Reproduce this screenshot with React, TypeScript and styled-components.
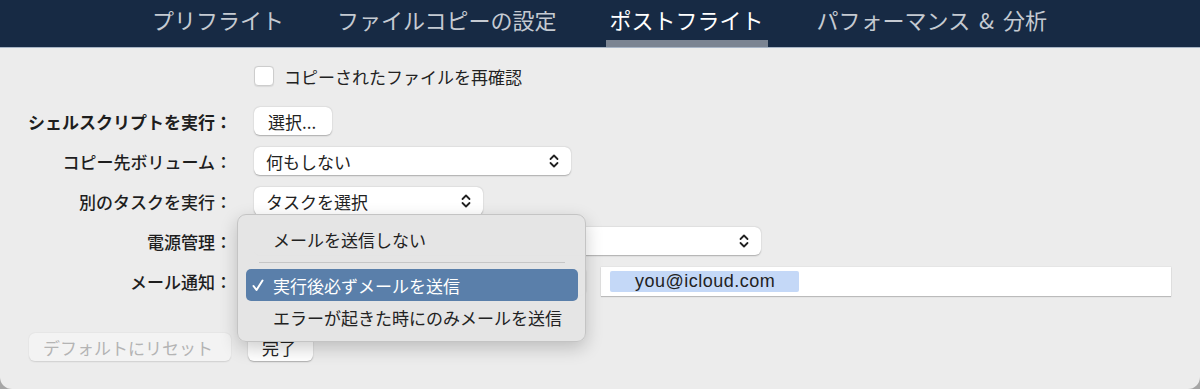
import styled, { createGlobalStyle } from "styled-components";

const GlobalStyle = createGlobalStyle`
  html, body {
    margin: 0;
    padding: 0;
    background: #a6a6a6;
  }
  body {
    font-family: "Noto Sans CJK JP", "Noto Sans", sans-serif;
    -webkit-font-smoothing: antialiased;
  }
`;

const Window = styled.div`
  width: 1200px;
  height: 389px;
  background: #ececec;
  border-radius: 0 0 12px 12px;
  overflow: hidden;
  display: flex;
  flex-direction: column;
`;

const TabBar = styled.div`
  height: 47px;
  background: #172a44;
  border-bottom: 1px solid #a7b4c5;
  display: flex;
  align-items: stretch;
  gap: 45px;
  padding-left: 148px;
`;

const Tab = styled.div<{ active?: boolean }>`
  padding: 0 4px;
  font-size: 22px;
  line-height: 39px;
  word-spacing: 4px;
  color: ${({ active }) => (active ? "#ffffff" : "#c5cad2")};
  border-bottom: 7px solid ${({ active }) => (active ? "#7b8492" : "transparent")};
  white-space: nowrap;
`;

const Form = styled.div`
  padding-top: 8px;
  display: flex;
  flex-direction: column;
`;

const Row = styled.div<{ first?: boolean }>`
  display: grid;
  grid-template-columns: 232px 1fr;
  column-gap: 22px;
  align-items: center;
  height: 40px;
  margin-bottom: ${({ first }) => (first ? "5px" : "0")};
`;

const Label = styled.div<{ bold?: boolean }>`
  text-align: right;
  font-size: 17px;
  color: #1e1e1e;
  font-weight: ${({ bold }) => (bold ? 700 : 500)};
  white-space: nowrap;
`;

const Controls = styled.div`
  display: flex;
  align-items: center;
  gap: 15px;
`;

const CheckLabel = styled.label`
  display: flex;
  align-items: center;
  gap: 10px;
  font-size: 17px;
  color: #222;
`;

const CheckBox = styled.span`
  width: 18px;
  height: 18px;
  background: #fff;
  border: 1px solid #cdcdcd;
  border-radius: 4px;
  box-shadow: 0 0.5px 1px rgba(0, 0, 0, 0.08);
`;

const Button = styled.div<{ disabled?: boolean; width: number }>`
  width: ${({ width }) => width}px;
  height: 28px;
  box-sizing: border-box;
  padding-left: 14px;
  display: flex;
  align-items: center;
  font-size: 17px;
  border-radius: 6px;
  background: ${({ disabled }) => (disabled ? "#f3f3f3" : "#ffffff")};
  color: ${({ disabled }) => (disabled ? "#b4b4b4" : "#222")};
  box-shadow: 0 0.5px 1.5px rgba(0, 0, 0, ${({ disabled }) => (disabled ? 0.12 : 0.28)});
`;

const SelectBox = styled.div<{ width: number }>`
  position: relative;
  width: ${({ width }) => width}px;
  height: 28px;
  box-sizing: border-box;
  padding: 0 12px;
  display: flex;
  align-items: center;
  justify-content: space-between;
  font-size: 17px;
  color: #222;
  background: #fff;
  border-radius: 6px;
  box-shadow: 0 0.5px 1.5px rgba(0, 0, 0, 0.28);
`;

const TextField = styled.div`
  width: 570px;
  height: 29px;
  box-sizing: border-box;
  padding: 0 9px;
  display: flex;
  align-items: center;
  background: #fff;
  box-shadow: 0 1px 1px rgba(0, 0, 0, 0.18), 0 0 0 0.5px rgba(0, 0, 0, 0.06);
`;

const Selected = styled.span`
  background: #c4d8f7;
  border-radius: 2px;
  padding: 0 24px 0 25px;
  font-family: "Liberation Sans", Arial, sans-serif;
  font-size: 18px;
  letter-spacing: 0.5px;
  line-height: 21px;
  color: #222;
`;

const Footer = styled.div`
  margin-top: 32px;
  padding-left: 29px;
  display: flex;
  gap: 17px;
`;

const Menu = styled.div`
  position: absolute;
  left: -17px;
  top: -53px;
  width: 349px;
  box-sizing: border-box;
  padding: 8px 7px 8px 8px;
  background: rgba(228, 228, 228, 0.98);
  border: 1px solid #c4c4c4;
  border-radius: 9px;
  box-shadow: 0 6px 18px rgba(0, 0, 0, 0.2);
  z-index: 2;
`;

const MenuItem = styled.div<{ highlighted?: boolean }>`
  position: relative;
  height: 32px;
  padding-left: 27px;
  display: flex;
  align-items: center;
  font-size: 17px;
  border-radius: 5px;
  white-space: nowrap;
  color: ${({ highlighted }) => (highlighted ? "#fff" : "#222")};
  background: ${({ highlighted }) => (highlighted ? "#5a7faa" : "transparent")};
`;

const CheckMark = styled.svg`
  position: absolute;
  left: 6px;
  top: 10px;
`;

const Separator = styled.div`
  height: 1px;
  margin: 7px 13px 6px;
  background: #c6c6c6;
`;

function Chevrons() {
  return (
    <svg width="10" height="16" viewBox="0 0 10 16">
      <path
        d="M1.5 6 L5 2.5 L8.5 6 M1.5 10 L5 13.5 L8.5 10"
        fill="none"
        stroke="#222"
        strokeWidth="1.8"
        strokeLinecap="round"
        strokeLinejoin="round"
      />
    </svg>
  );
}

export default function App() {
  const tabs = ["プリフライト", "ファイルコピーの設定", "ポストフライト", "パフォーマンス & 分析"];

  return (
    <>
      <GlobalStyle />
      <Window>
        <TabBar>
          {tabs.map((t, i) => (
            <Tab key={t} active={i === 2}>
              {t}
            </Tab>
          ))}
        </TabBar>

        <Form>
          <Row first>
            <div />
            <CheckLabel>
              <CheckBox />
              コピーされたファイルを再確認
            </CheckLabel>
          </Row>
          <Row>
            <Label bold>シェルスクリプトを実行：</Label>
            <Controls>
              <Button width={78}>選択...</Button>
            </Controls>
          </Row>
          <Row>
            <Label>コピー先ボリューム：</Label>
            <Controls>
              <SelectBox width={317}>
                何もしない
                <Chevrons />
              </SelectBox>
            </Controls>
          </Row>
          <Row>
            <Label>別のタスクを実行：</Label>
            <Controls>
              <SelectBox width={229}>
                タスクを選択
                <Chevrons />
              </SelectBox>
            </Controls>
          </Row>
          <Row>
            <Label>電源管理：</Label>
            <Controls>
              {/* its value is hidden under the open menu */}
              <SelectBox width={507}>
                <span />
                <Chevrons />
              </SelectBox>
            </Controls>
          </Row>
          <Row>
            <Label>メール通知：</Label>
            <Controls>
              <SelectBox width={332}>
                <span />
                <Chevrons />
                <Menu>
                  <MenuItem>メールを送信しない</MenuItem>
                  <Separator />
                  <MenuItem highlighted>
                    <CheckMark width="12" height="13" viewBox="0 0 12 13">
                      <path
                        d="M1.5 7 L4.5 11 L10.5 1.5"
                        fill="none"
                        stroke="#fff"
                        strokeWidth="2"
                        strokeLinecap="round"
                        strokeLinejoin="round"
                      />
                    </CheckMark>
                    実行後必ずメールを送信
                  </MenuItem>
                  <MenuItem>エラーが起きた時にのみメールを送信</MenuItem>
                </Menu>
              </SelectBox>
              <TextField>
                <Selected>you@icloud.com</Selected>
              </TextField>
            </Controls>
          </Row>
        </Form>

        <Footer>
          <Button width={202} disabled>
            デフォルトにリセット
          </Button>
          <Button width={65}>完了</Button>
        </Footer>
      </Window>
    </>
  );
}
